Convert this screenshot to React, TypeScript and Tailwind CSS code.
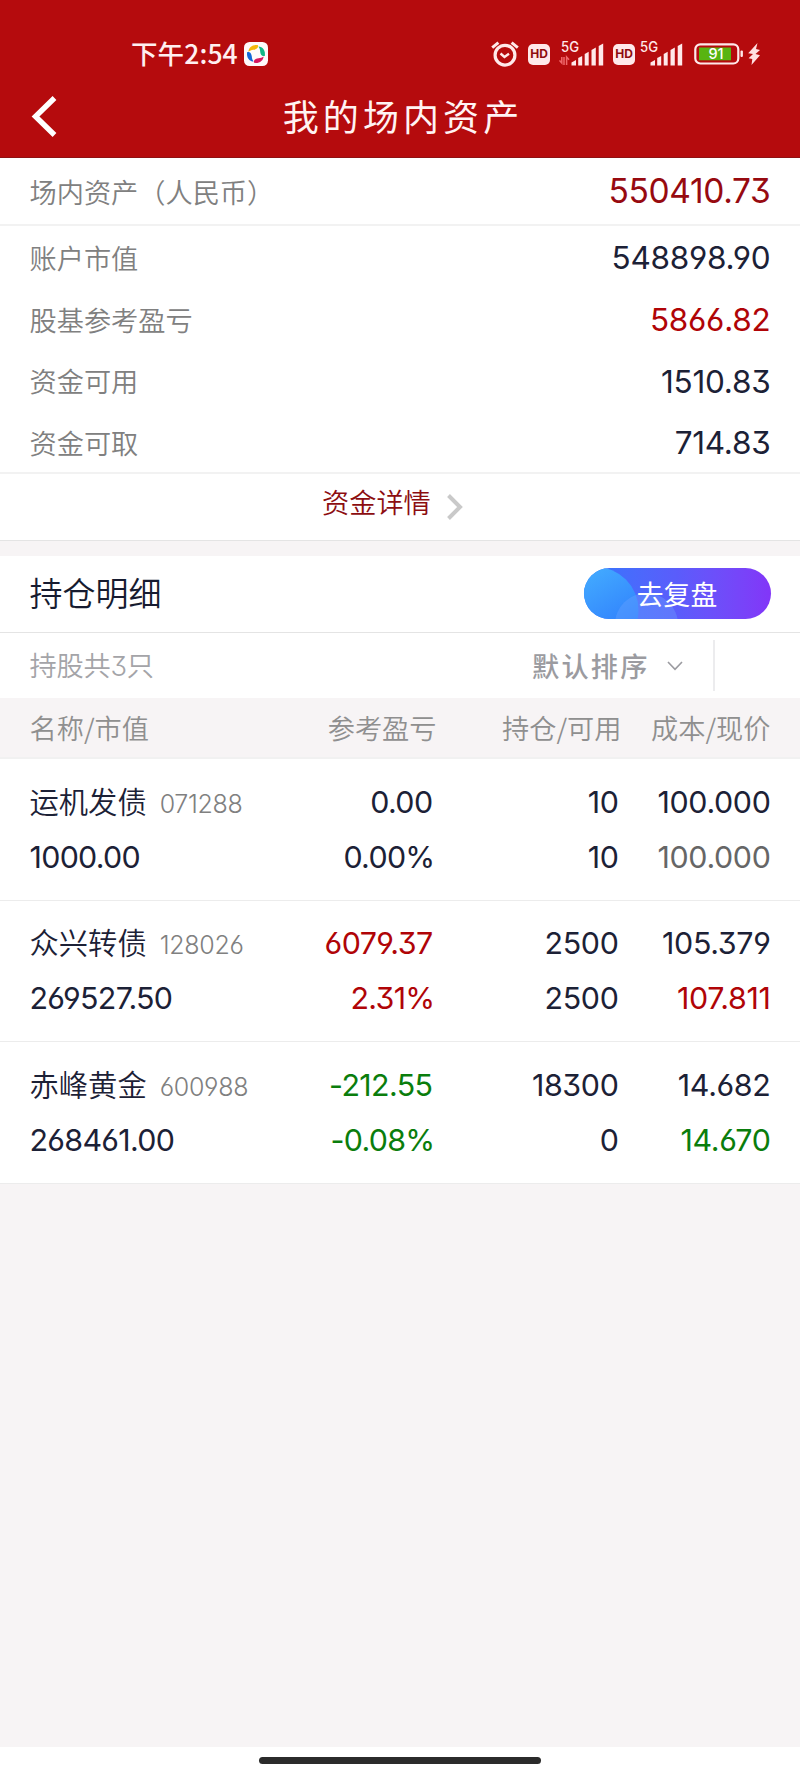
import { clsx } from "clsx";

type Tone = "ink" | "gray" | "red" | "green";

const toneClass: Record<Tone, string> = {
  ink: "text-[#1c2136]",
  gray: "text-[#666666]",
  red: "text-[#b00407]",
  green: "text-[#0a7d0c]",
};

const summary: { label: string; value: string; tone: Tone }[] = [
  { label: "账户市值", value: "548898.90", tone: "ink" },
  { label: "股基参考盈亏", value: "5866.82", tone: "red" },
  { label: "资金可用", value: "1510.83", tone: "ink" },
  { label: "资金可取", value: "714.83", tone: "ink" },
];

type Holding = {
  name: string;
  code: string;
  marketValue: string;
  profit: string;
  profitRate: string;
  profitTone: Tone;
  amount: string;
  available: string;
  cost: string;
  price: string;
  priceTone: Tone;
};

const holdings: Holding[] = [
  {
    name: "运机发债",
    code: "071288",
    marketValue: "1000.00",
    profit: "0.00",
    profitRate: "0.00%",
    profitTone: "ink",
    amount: "10",
    available: "10",
    cost: "100.000",
    price: "100.000",
    priceTone: "gray",
  },
  {
    name: "众兴转债",
    code: "128026",
    marketValue: "269527.50",
    profit: "6079.37",
    profitRate: "2.31%",
    profitTone: "red",
    amount: "2500",
    available: "2500",
    cost: "105.379",
    price: "107.811",
    priceTone: "red",
  },
  {
    name: "赤峰黄金",
    code: "600988",
    marketValue: "268461.00",
    profit: "-212.55",
    profitRate: "-0.08%",
    profitTone: "green",
    amount: "18300",
    available: "0",
    cost: "14.682",
    price: "14.670",
    priceTone: "green",
  },
];

// Numbers use the open 6/9 and the flat-topped 3
const Num = ({ children, className }: { children: string; className?: string }) => (
  <span
    className={clsx(
      "font-['Inter','Noto_Sans_CJK_SC',sans-serif] [font-feature-settings:'cv03','cv04','cv09'] whitespace-nowrap",
      className
    )}
  >
    {children}
  </span>
);

const AlarmIcon = () => (
  <svg className="w-7 h-[26px]" viewBox="0 0 28 26" fill="none" stroke="#ffe9ea">
    <circle cx="14" cy="14.2" r="9.9" strokeWidth="3.2" />
    <path d="M9.5 12.5L13.5 16L18 12.8" strokeWidth="2.4" />
    <path d="M1.2 6.6L7.4 1.6M26.8 6.6L20.6 1.6" strokeWidth="3" />
  </svg>
);

const HdIcon = () => (
  <div className="w-[22px] h-[21px] rounded-[5px] bg-[#ffe9ea] flex items-center justify-center font-['Inter',sans-serif] text-[12px] leading-none font-bold text-[#8f0b0e]">
    HD
  </div>
);

const SignalIcon = ({ data }: { data?: boolean }) => (
  <svg className="w-[46px] h-8 -mt-2" viewBox="0 -8 46 32" fill="#ffe9ea">
    <text x="2" y="10.4" fontSize="14" fontFamily="Inter, sans-serif" fontWeight="500" textLength="18" lengthAdjust="spacingAndGlyphs">
      5G
    </text>
    {data && <path d="M2.8 15v6l-2.3-2.6M5 15v8M7.6 23v-8l2.4 2.8" stroke="#f0686b" strokeWidth="1.5" fill="none" />}
    <path d="M12.5 20.5L17 18V23.5H12.5Z" />
    <path d="M19.2 16L23.2 14V23.5H19.2Z" />
    <path d="M25.7 12L29.7 9.8V23.5H25.7Z" />
    <path d="M32.5 8L36.8 5.6V23.5H32.5Z" />
    <path d="M39.7 4L44.2 1.4V23.5H39.7Z" />
  </svg>
);

const BatteryIcon = () => (
  <svg className="w-[50px] h-[22px]" viewBox="0 0 50 22" fill="none">
    <rect x="1.3" y="1.3" width="43" height="19.2" rx="5" stroke="#ffe9ea" strokeWidth="2.2" />
    <rect x="5" y="4.5" width="32" height="12.8" fill="#58b411" />
    <rect x="46.5" y="7.5" width="2.4" height="6.5" rx="1" fill="#ffe9ea" />
    <text x="22" y="16.2" textAnchor="middle" fontSize="14.5" fontFamily="Inter, sans-serif" fontWeight="500" fill="#fff">
      91
    </text>
  </svg>
);

const BoltIcon = () => (
  <svg className="w-3 h-[22px]" viewBox="0 0 12 22" fill="#ffdfe1">
    <path d="M9.5 0L0.2 10.2L5 11L0.6 15.2L4.3 16L3.5 22L12 12.2L7.5 11L12 7L8 6Z" />
  </svg>
);

const AppBadge = () => (
  <svg className="w-6 h-6" viewBox="0 0 24 24">
    <rect width="24" height="24" rx="5.5" fill="#fffafa" />
    <path d="M4.4 9.8C4.6 5.6 8.5 2.4 14 3.2C14.6 6.4 12 7.6 9.4 7.8C7.4 8 6 8.6 4.4 9.8Z" fill="#f5b70c" />
    <path d="M14.4 4.4C18.6 4.4 21.9 8.6 20.8 14C17.6 14.6 16.4 12 16.2 9.4C16 7.4 15.6 6 14.4 4.4Z" fill="#12b886" />
    <path d="M19.6 14.4C19.4 18.4 15.5 21.6 10 20.8C9.4 17.6 12 16.4 14.6 16.2C16.6 16 18 15.6 19.6 14.4Z" fill="#d6175e" />
    <path d="M9.6 19.6C5.4 19.6 2.1 15.4 3.2 10C6.4 9.4 7.6 12 7.8 14.6C8 16.6 8.4 18 9.6 19.6Z" fill="#1467d8" />
  </svg>
);

const StatusBar = () => (
  <div className="flex items-center h-[30px] mt-[39px] pl-[131px] pr-10">
    <span className="-mt-[2px] text-[26.5px] leading-[30px] font-medium text-[#ffeff0] w-[113px] whitespace-nowrap tracking-[0.1px]">
      下午2:54
    </span>
    <AppBadge />
    <div className="ml-auto flex items-center">
      <AlarmIcon />
      <div className="ml-[9px]"><HdIcon /></div>
      <div className="ml-[9px]"><SignalIcon data /></div>
      <div className="ml-2"><HdIcon /></div>
      <div className="ml-[3px]"><SignalIcon /></div>
      <div className="ml-[10px]"><BatteryIcon /></div>
      <div className="ml-1"><BoltIcon /></div>
    </div>
  </div>
);

const Header = () => (
  <header className="h-[158px] bg-[#b50b0d] border-b border-[#8e1214] overflow-hidden">
    <StatusBar />
    <div className="flex items-center h-[92px] pl-[31px] pr-[51px]">
      <svg className="mt-[2px] w-[26px] h-[42px]" viewBox="0 0 26 42" fill="none" stroke="#fff" strokeWidth="5.4">
        <path d="M23.5 3L4.5 21.5L23.5 40" />
      </svg>
      <h1 className="flex-1 text-center text-[36px] leading-none tracking-[4.1px] text-[#fff3f3] font-normal">我的场内资产</h1>
    </div>
  </header>
);

const Summary = () => (
  <section className="bg-white">
    <div className="h-[68px] px-[29.5px] flex items-center justify-between border-b-2 border-[#f2f2f2]">
      <span className="text-[27.2px] text-[#808080]">场内资产（人民币）</span>
      <Num className="text-[33.5px] font-normal tracking-[-0.35px] text-[#970a10]">550410.73</Num>
    </div>
    <div className="pt-px h-[248px] flex flex-col border-b-2 border-[#f2f2f2]">
      {summary.map((row) => (
        <div key={row.label} className="h-[61.7px] shrink-0 px-[29.5px] flex items-center justify-between">
          <span className="-mt-px text-[27.2px] text-[#808080]">{row.label}</span>
          <Num className={clsx("text-[31.5px] font-normal tracking-[-0.25px]", toneClass[row.tone])}>{row.value}</Num>
        </div>
      ))}
    </div>
    <div className="h-[67px] pl-[322px] pb-3 flex items-center border-b border-[#e4e4e4] text-[27.2px] text-[#8c0d10]">
      资金详情
      <svg className="ml-[15px] mt-3 w-[18px] h-7" viewBox="0 0 18 28" fill="none" stroke="#c9c9c9" strokeWidth="4">
        <path d="M2.5 2.5L14 14L2.5 25.5" />
      </svg>
    </div>
  </section>
);

const ReviewButton = () => (
  <button className="relative -mt-px w-[187px] h-[51px] rounded-full overflow-hidden bg-linear-to-r from-[#2b78fd] via-[#5a5cfb] to-[#8235f8]">
    <svg className="absolute inset-0 w-full h-full" viewBox="0 0 186 51">
      <defs>
        <linearGradient id="glow" x1="0.3" y1="0" x2="0.8" y2="0.8">
          <stop offset="0" stopColor="#45b0ff" />
          <stop offset="1" stopColor="#2f7dfd" />
        </linearGradient>
      </defs>
      <circle cx="11" cy="42" r="43" fill="url(#glow)" />
      <circle cx="62" cy="56.5" r="31.5" fill="#6fa6ff" fillOpacity="0.35" />
    </svg>
    <span className="relative block text-[26.8px] leading-[49px] font-normal text-white">去复盘</span>
  </button>
);

const columns = "grid grid-cols-[280px_126px_184px_151px] px-[29.5px]";

const HoldingRow = ({ item }: { item: Holding }) => (
  <div className={clsx(columns, "h-[141.7px] pt-4 auto-rows-[55px] items-center border-b border-[#ececec] text-[30.4px] font-normal tracking-[-0.35px] text-[#1c2136]")}>
    <div className="flex items-center whitespace-nowrap">
      <span className="-mt-1 text-[29.3px] tracking-normal font-[350]">{item.name}</span>
      <Num className="ml-[13px] mt-1 text-[25px] font-light tracking-[-0.3px] text-[#808080]">{item.code}</Num>
    </div>
    <Num className={clsx("text-right pr-[3px] tracking-[-0.6px]", toneClass[item.profitTone])}>{item.profit}</Num>
    <Num className="text-right pr-px">{item.amount}</Num>
    <Num className="text-right">{item.cost}</Num>
    <Num className="tracking-[-0.7px]">{item.marketValue}</Num>
    <Num className={clsx("text-right pr-px tracking-[-0.7px]", toneClass[item.profitTone])}>{item.profitRate}</Num>
    <Num className="text-right pr-px">{item.available}</Num>
    <Num className={clsx("text-right", toneClass[item.priceTone])}>{item.price}</Num>
  </div>
);

const Holdings = () => (
  <section className="mt-[15px] bg-white">
    <div className="h-[77px] px-[29.5px] flex items-center justify-between border-b border-[#e4e4e4]">
      <h2 className="-mt-[2px] text-[33px] text-[#161b30] font-[350]">持仓明细</h2>
      <ReviewButton />
    </div>
    <div className="h-[65px] pl-[29.5px] flex items-center text-[27.2px]">
      <span className="text-[#a4a4a8] tracking-[-0.2px]">
        持股共<Num>3</Num>只
      </span>
      <div className="ml-auto flex items-center w-[181px] text-[#9b9ba0]">
        <span className="tracking-[2.2px] whitespace-nowrap font-medium">默认排序</span>
        <svg className="ml-[17px] mt-px w-4 h-[10px] shrink-0" viewBox="0 0 16 10" fill="none" stroke="#9b9ba0" strokeWidth="1.6">
          <path d="M1 1L8 8.4L15 1" />
        </svg>
      </div>
      <div className="w-[87px] h-[51px] border-l-2 border-[#ececee]" />
    </div>
    <div className={clsx(columns, "h-[61px] items-center bg-[#f7f4f5] border-b-2 border-[#f1f1f1] text-[27.2px] text-[#8f8f8f] whitespace-nowrap")}>
      <span>名称/市值</span>
      <span className="text-right -mr-px">参考盈亏</span>
      <span className="text-right -mr-[2px]">持仓/可用</span>
      <span className="text-right">成本/现价</span>
    </div>
    {holdings.map((item) => (
      <HoldingRow key={item.code} item={item} />
    ))}
  </section>
);

export default function App() {
  return (
    <div className="w-[800px] h-[1778px] flex flex-col bg-[#f7f4f5] font-['Noto_Sans_CJK_SC',sans-serif] font-[350] overflow-hidden">
      <Header />
      <Summary />
      <Holdings />
      <footer className="mt-auto h-[31px] bg-white flex justify-center pt-[10px]">
        <div className="w-[282px] h-[7px] rounded-full bg-[#2b2b2b]" />
      </footer>
    </div>
  );
}
